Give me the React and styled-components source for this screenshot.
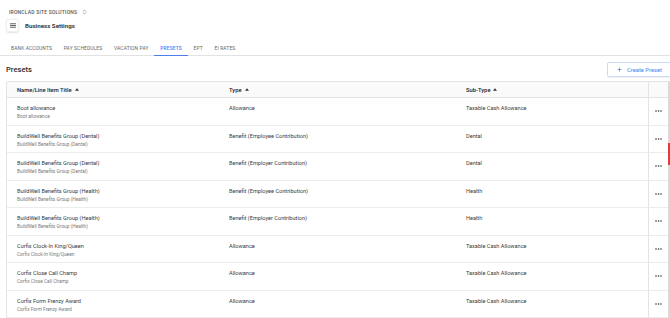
import React from "react";
import styled, { createGlobalStyle } from "styled-components";

const Global = createGlobalStyle`
  html, body { margin: 0; padding: 0; background: #fff; overflow: hidden; }
  body { font-family: Roboto, "Noto Sans", "Liberation Sans", sans-serif; color: #212121; }
  * { box-sizing: border-box; }
`;

const Page = styled.div`
  width: 676px;
  display: flex;
  flex-direction: column;
`;

const TopBar = styled.header`
  display: flex;
  flex-direction: column;
  padding: 7px 0 0 6px;
`;

const OrgRow = styled.div`
  display: flex;
  align-items: center;
  gap: 5px;
  padding-left: 3px;
  height: 9px;
  font-size: 5px;
  font-weight: 500;
  letter-spacing: 0.2px;
  color: #5a5a5a;
  text-transform: uppercase;
`;

const TitleRow = styled.div`
  display: flex;
  align-items: center;
  gap: 6px;
  margin-top: 3px;
`;

const MenuBox = styled.div`
  width: 13px;
  height: 13px;
  border-radius: 3px;
  border: 1px solid #efefef;
  box-shadow: 0 0.5px 1.5px rgba(0,0,0,0.12);
  display: flex;
  align-items: center;
  justify-content: center;
`;

const PageTitle = styled.div`
  font-size: 6.2px;
  font-weight: 600;
  color: #2a2a2a;
`;

const Tabs = styled.nav`
  display: flex;
  margin-top: 8px;
  padding-left: 5.2px;
  border-bottom: 1px solid #e2e2e2;
  width: 670px;
`;

const Tab = styled.div`
  padding: 0 5.9px;
  height: 16px;
  display: flex;
  align-items: center;
  font-size: 4.9px;
  letter-spacing: 0.12px;
  text-transform: uppercase;
  color: ${p => (p.$active ? "#4a7ff0" : "#666")};
  font-weight: ${p => (p.$active ? 500 : 400)};
  border-bottom: 1.5px solid ${p => (p.$active ? "#4a7ff0" : "transparent")};
  margin-bottom: -1px;
`;

const Section = styled.section`
  display: flex;
  flex-direction: column;
  padding: 5px 0 0 6px;
`;

const SectionHead = styled.div`
  display: flex;
  align-items: center;
  justify-content: space-between;
  height: 16px;
  padding-top: 1px;
`;

const SectionTitle = styled.h2`
  margin: 0;
  font-size: 7.6px;
  font-weight: 500;
  color: #2a2a2a;
`;

const CreateButton = styled.button`
  font-family: inherit;
  height: 15px;
  width: 69px;
  border: 1px solid #cddcf6;
  border-radius: 2px;
  background: #fff;
  color: #4a7ff0;
  font-size: 5.8px;
  display: flex;
  align-items: center;
  gap: 5px;
  padding: 0 0 0 9px;
  box-shadow: 0 0.5px 1px rgba(0,0,0,0.06);
`;

const TableWrap = styled.div`
  position: relative;
  margin-top: 4px;
  border: 1px solid #e4e4e4;
  border-right: none;
  border-bottom: none;
  border-radius: 2px 0 0 0;
`;

const Grid = styled.div`
  display: grid;
  grid-template-columns: 212px 237px 192px 20px 9px;
`;

const HeadCell = styled.div`
  height: 16px;
  display: flex;
  align-items: center;
  gap: 3px;
  padding-left: ${p => p.$pad ?? 0}px;
  background: #fafafa;
  border-bottom: 1px solid #e4e4e4;
  border-left: ${p => (p.$sep ? "1px solid #e4e4e4" : "none")};
  font-size: 5.8px;
  font-weight: 500;
  color: #222;
`;

const Cell = styled.div`
  height: 27.5px;
  display: flex;
  flex-direction: column;
  padding: 7px 0 0 ${p => p.$pad ?? 0}px;
  border-bottom: 1.5px solid #ececec;
  border-left: ${p => (p.$sep ? "1px solid #e4e4e4" : "none")};
  justify-content: ${p => (p.$center ? "center" : "flex-start")};
  align-items: ${p => (p.$center ? "center" : "stretch")};
  ${p => (p.$center ? "padding: 0;" : "")}
`;

const Primary = styled.div`
  font-size: 5.6px;
  color: #3a3a3a;
  line-height: 7px;
`;

const Secondary = styled.div`
  font-size: 4.8px;
  color: #7a7a7a;
  line-height: 7px;
  margin-top: 1px;
`;

const Scrollbar = styled.div`
  position: absolute;
  top: 0;
  bottom: 0;
  left: 661px;
  width: 2px;
  background: #d9d9d9;
`;

const ScrollThumb = styled.div`
  position: absolute;
  left: 0;
  top: 61px;
  width: 2px;
  height: 22px;
  background: #e53935;
`;

const Menu = () => (
  <svg width="8" height="7" viewBox="0 0 24 24" fill="none" stroke="#333" strokeWidth="2.6" strokeLinecap="round">
    <line x1="3" y1="6" x2="21" y2="6" />
    <line x1="3" y1="12" x2="21" y2="12" />
    <line x1="3" y1="18" x2="21" y2="18" />
  </svg>
);

const UpDown = () => (
  <svg width="5" height="6" viewBox="0 0 10 12" fill="none" stroke="#777" strokeWidth="1.2" strokeLinecap="round" strokeLinejoin="round">
    <polyline points="2.5,4.5 5,2 7.5,4.5" />
    <polyline points="2.5,7.5 5,10 7.5,7.5" />
  </svg>
);

const SortUp = () => (
  <svg width="4" height="3" viewBox="0 0 8 5"><polygon points="0,5 4,0 8,5" fill="#333" /></svg>
);

const Plus = () => (
  <svg width="5" height="5" viewBox="0 0 10 10" stroke="#4a7ff0" strokeWidth="1.4"><line x1="5" y1="1" x2="5" y2="9" /><line x1="1" y1="5" x2="9" y2="5" /></svg>
);

const Dots = () => (
  <svg width="7" height="2" viewBox="0 0 14 4" fill="#333">
    <circle cx="2" cy="2" r="1.6" /><circle cx="7" cy="2" r="1.6" /><circle cx="12" cy="2" r="1.6" />
  </svg>
);

const tabs = ["Bank Accounts", "Pay Schedules", "Vacation Pay", "Presets", "EPT", "EI Rates"];

const rows = [
  ["Boot allowance", "Allowance", "Taxable Cash Allowance"],
  ["BuildWell Benefits Group (Dental)", "Benefit (Employee Contribution)", "Dental"],
  ["BuildWell Benefits Group (Dental)", "Benefit (Employer Contribution)", "Dental"],
  ["BuildWell Benefits Group (Health)", "Benefit (Employee Contribution)", "Health"],
  ["BuildWell Benefits Group (Health)", "Benefit (Employer Contribution)", "Health"],
  ["Corfix Clock-In King/Queen", "Allowance", "Taxable Cash Allowance"],
  ["Corfix Close Call Champ", "Allowance", "Taxable Cash Allowance"],
  ["Corfix Form Frenzy Award", "Allowance", "Taxable Cash Allowance"],
];

export default function App() {
  return (
    <Page>
      <Global />
      <TopBar>
        <OrgRow>Ironclad Site Solutions <UpDown /></OrgRow>
        <TitleRow>
          <MenuBox><Menu /></MenuBox>
          <PageTitle>Business Settings</PageTitle>
        </TitleRow>
      </TopBar>
      <Tabs>
        {tabs.map(t => (
          <Tab key={t} $active={t === "Presets"}>{t}</Tab>
        ))}
      </Tabs>
      <Section>
        <SectionHead>
          <SectionTitle>Presets</SectionTitle>
          <CreateButton><Plus />Create Preset</CreateButton>
        </SectionHead>
        <TableWrap>
          <Grid>
            <HeadCell $pad={10}>Name/Line Item Title <SortUp /></HeadCell>
            <HeadCell $pad={10}>Type <SortUp /></HeadCell>
            <HeadCell $pad={10}>Sub-Type <SortUp /></HeadCell>
            <HeadCell $sep />
            <HeadCell />
            {rows.map((r, i) => (
              <React.Fragment key={i}>
                <Cell $pad={10}>
                  <Primary>{r[0]}</Primary>
                  <Secondary>{r[0]}</Secondary>
                </Cell>
                <Cell $pad={10}><Primary>{r[1]}</Primary></Cell>
                <Cell $pad={10}><Primary>{r[2]}</Primary></Cell>
                <Cell $sep $center><Dots /></Cell>
                <Cell />
              </React.Fragment>
            ))}
          </Grid>
          <Scrollbar><ScrollThumb /></Scrollbar>
        </TableWrap>
      </Section>
    </Page>
  );
}
